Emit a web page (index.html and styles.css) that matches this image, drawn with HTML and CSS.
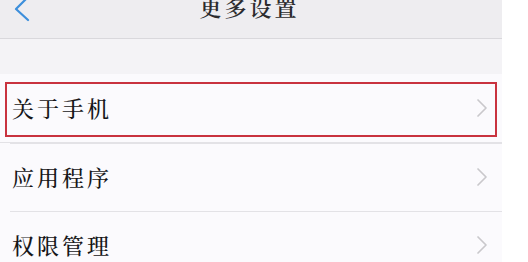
FILE: index.html
```html
<!DOCTYPE html>
<html lang="zh">
<head>
<meta charset="utf-8">
<link rel="stylesheet" href="styles.css">
</head>
<body>
<div class="page">
  <div class="screen">
    <header class="topbar">
      <svg class="back" width="18" height="24" viewBox="0 0 18 24"><path d="M15 -3 L3 9 L15 20" fill="none" stroke="#3d8fdb" stroke-width="2.2" stroke-linecap="round" stroke-linejoin="round"/></svg>
      <div class="title">更多设置</div>
    </header>
    <div class="gap"></div>
    <ul class="list">
      <li class="row highlight"><span class="label">关于手机</span><svg class="chev" width="12" height="20" viewBox="0 0 12 20"><path d="M2 2 L10 10 L2 18" fill="none" stroke="#c9c8cc" stroke-width="1.7" stroke-linecap="round" stroke-linejoin="round"/></svg></li>
      <li class="row"><span class="label">应用程序</span><svg class="chev" width="12" height="20" viewBox="0 0 12 20"><path d="M2 2 L10 10 L2 18" fill="none" stroke="#c9c8cc" stroke-width="1.7" stroke-linecap="round" stroke-linejoin="round"/></svg></li>
      <li class="row"><span class="label">权限管理</span><svg class="chev" width="12" height="20" viewBox="0 0 12 20"><path d="M2 2 L10 10 L2 18" fill="none" stroke="#c9c8cc" stroke-width="1.7" stroke-linecap="round" stroke-linejoin="round"/></svg></li>
    </ul>
  </div>
  <div class="edge"></div>
</div>
</body>
</html>
```
FILE: styles.css
```css
html, body {
  margin: 0;
  padding: 0;
  height: 262px;
  overflow: hidden;
  background: #ffffff;
  font-family: "Noto Serif CJK SC", "Noto Sans CJK SC", "Liberation Serif", serif;
}
.page {
  display: flex;
  width: 528px;
  height: 262px;
}
.screen {
  width: 502px;
  height: 262px;
  background: #f4f3f6;
  display: flex;
  flex-direction: column;
  overflow: hidden;
}
.edge {
  flex: 1;
  background: #ffffff;
}
.topbar {
  height: 38px;
  flex: none;
  background: #eeedf0;
  border-bottom: 1px solid #d9d8dc;
  display: flex;
  align-items: flex-start;
}
.back {
  margin-left: 13px;
  flex: none;
}
.title {
  flex: 1;
  text-align: center;
  margin-left: -34px;
  margin-top: -9px;
  font-size: 22px;
  font-weight: 600;
  letter-spacing: 3px;
  color: #2b2b2d;
  line-height: 32px;
}
.gap {
  height: 35px;
  flex: none;
}
.list {
  list-style: none;
  margin: 0;
  padding: 0;
  background: #fbfafd;
}
.row {
  height: 68px;
  display: flex;
  align-items: center;
  justify-content: space-between;
  padding: 0 14px 0 12px;
  position: relative;
}
.row + .row::before {
  content: "";
  position: absolute;
  top: 0;
  left: 10px;
  right: 0;
  height: 1px;
  background: #e3e2e6;
}
.row:first-child {
  border-bottom: 1px solid #e3e2e6;
}
.label {
  font-size: 22px;
  font-weight: 500;
  letter-spacing: 3px;
  color: #161618;
  margin-top: -2px;
}
.chev {
  flex: none;
}
.highlight::after {
  content: "";
  position: absolute;
  left: 5px;
  top: 8px;
  width: 488px;
  height: 51px;
  border: 2px solid #c9333f;
}
```
